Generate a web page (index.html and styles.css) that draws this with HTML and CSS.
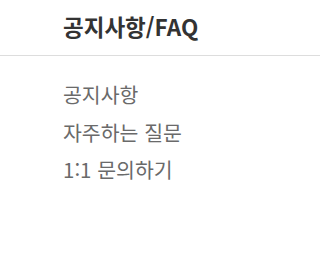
FILE: index.html
```html
<!DOCTYPE html>
<html lang="ko">
<head>
<meta charset="utf-8">
<link rel="stylesheet" href="styles.css">
</head>
<body>
<div class="panel">
  <h2 class="title">공지사항/FAQ</h2>
  <ul class="menu">
    <li><a href="#">공지사항</a></li>
    <li><a href="#">자주하는 질문</a></li>
    <li><a href="#">1:1 문의하기</a></li>
  </ul>
</div>
</body>
</html>
```
FILE: styles.css
```css
html, body {
  margin: 0;
  padding: 0;
  background: #fff;
}
body {
  font-family: "Noto Sans CJK KR", "Noto Sans", sans-serif;
}
.panel {
  width: 100%;
}
.title {
  margin: 0;
  padding: 11px 0 13px 63px;
  font-size: 22.5px;
  font-weight: 700;
  line-height: 31px;
  color: #333;
  border-bottom: 1px solid #ddd;
}
.menu {
  list-style: none;
  margin: 0;
  padding: 20px 0 0 63px;
}
.menu li {
  line-height: 37.5px;
  font-size: 20.5px;
}
.menu a {
  color: #6a6a6a;
  text-decoration: none;
}
```
